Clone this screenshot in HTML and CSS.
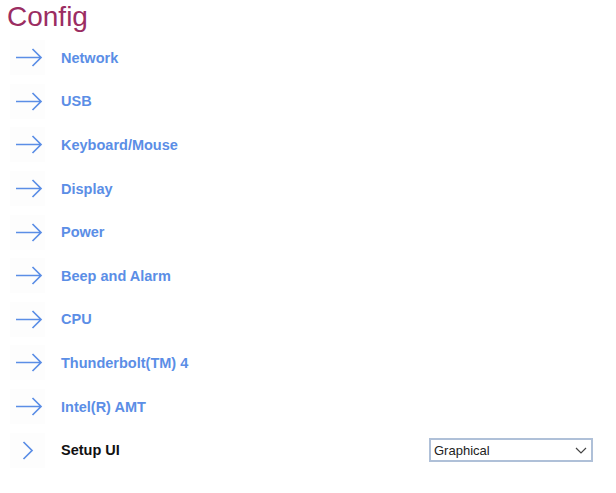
FILE: index.html
```html
<!DOCTYPE html>
<html>
<head>
<meta charset="utf-8">
<link rel="stylesheet" href="styles.css">
</head>
<body>
<h1 class="title">Config</h1>
<ul class="menu">
  <li class="row"><span class="icon"><svg width="35" height="35" viewBox="0 0 35 35"><path d="M6 17.5H31M22.5 9L31 17.5L22.5 26" fill="none" stroke="#5b8ee6" stroke-width="1.7"/></svg></span><span class="label">Network</span></li>
  <li class="row"><span class="icon"><svg width="35" height="35" viewBox="0 0 35 35"><path d="M6 17.5H31M22.5 9L31 17.5L22.5 26" fill="none" stroke="#5b8ee6" stroke-width="1.7"/></svg></span><span class="label">USB</span></li>
  <li class="row"><span class="icon"><svg width="35" height="35" viewBox="0 0 35 35"><path d="M6 17.5H31M22.5 9L31 17.5L22.5 26" fill="none" stroke="#5b8ee6" stroke-width="1.7"/></svg></span><span class="label">Keyboard/Mouse</span></li>
  <li class="row"><span class="icon"><svg width="35" height="35" viewBox="0 0 35 35"><path d="M6 17.5H31M22.5 9L31 17.5L22.5 26" fill="none" stroke="#5b8ee6" stroke-width="1.7"/></svg></span><span class="label">Display</span></li>
  <li class="row"><span class="icon"><svg width="35" height="35" viewBox="0 0 35 35"><path d="M6 17.5H31M22.5 9L31 17.5L22.5 26" fill="none" stroke="#5b8ee6" stroke-width="1.7"/></svg></span><span class="label">Power</span></li>
  <li class="row"><span class="icon"><svg width="35" height="35" viewBox="0 0 35 35"><path d="M6 17.5H31M22.5 9L31 17.5L22.5 26" fill="none" stroke="#5b8ee6" stroke-width="1.7"/></svg></span><span class="label">Beep and Alarm</span></li>
  <li class="row"><span class="icon"><svg width="35" height="35" viewBox="0 0 35 35"><path d="M6 17.5H31M22.5 9L31 17.5L22.5 26" fill="none" stroke="#5b8ee6" stroke-width="1.7"/></svg></span><span class="label">CPU</span></li>
  <li class="row"><span class="icon"><svg width="35" height="35" viewBox="0 0 35 35"><path d="M6 17.5H31M22.5 9L31 17.5L22.5 26" fill="none" stroke="#5b8ee6" stroke-width="1.7"/></svg></span><span class="label">Thunderbolt(TM) 4</span></li>
  <li class="row"><span class="icon"><svg width="35" height="35" viewBox="0 0 35 35"><path d="M6 17.5H31M22.5 9L31 17.5L22.5 26" fill="none" stroke="#5b8ee6" stroke-width="1.7"/></svg></span><span class="label">Intel(R) AMT</span></li>
  <li class="row"><span class="icon"><svg width="35" height="35" viewBox="0 0 35 35"><path d="M13.5 9L22 17.5L13.5 26" fill="none" stroke="#5b8ee6" stroke-width="1.7"/></svg></span><span class="label label-dark">Setup UI</span>
    <span class="select"><span class="select-text">Graphical</span><svg class="caret" width="12" height="7" viewBox="0 0 12 7"><path d="M1 1L6 6L11 1" fill="none" stroke="#444" stroke-width="1.2"/></svg></span>
  </li>
</ul>
</body>
</html>
```
FILE: styles.css
```css
html, body {
  margin: 0;
  padding: 0;
  background: #ffffff;
}
body {
  width: 616px;
  font-family: "Liberation Sans", Arial, sans-serif;
}
.title {
  margin: 0;
  padding: 1px 0 0 7px;
  font-size: 28px;
  font-weight: normal;
  line-height: 32px;
  color: #9b2d62;
}
.menu {
  list-style: none;
  margin: 3px 0 0 0;
  padding: 0 23px 0 10px;
}
.row {
  display: flex;
  align-items: center;
  height: 43.6px;
}
.icon {
  display: flex;
  width: 35px;
  height: 35px;
  background: #fdfdfd;
}
.icon svg {
  display: block;
}
.label {
  margin-left: 16px;
  font-size: 14.5px;
  font-weight: bold;
  color: #5b8ee6;
}
.label-dark {
  color: #111111;
}
.select {
  margin-left: auto;
  display: flex;
  align-items: center;
  justify-content: space-between;
  box-sizing: border-box;
  width: 164px;
  height: 24px;
  border: 2px solid #afc0d8;
  padding: 0 4px 0 3px;
  font-size: 13px;
  color: #222;
}
.caret {
  display: block;
}
```
